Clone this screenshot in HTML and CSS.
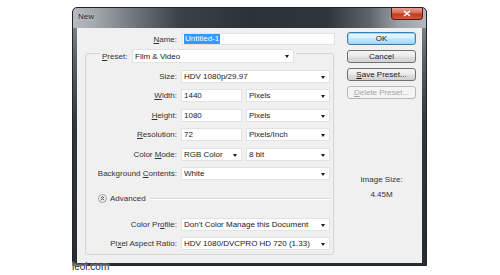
FILE: index.html
```html
<!DOCTYPE html>
<html>
<head>
<meta charset="utf-8">
<link rel="stylesheet" href="styles.css">
</head>
<body>
<div class="window">
  <div class="titlebar">
    <span class="title">New</span>
    <span class="close"><svg width="8" height="7" viewBox="0 0 8 7"><path d="M1 1 L7 6 M7 1 L1 6" stroke="#fff" stroke-width="1.6"/></svg></span>
  </div>
  <div class="client">
    <div class="main">
      <div class="name-row">
        <span class="nlabel"><u>N</u>ame:</span>
        <span class="field name-field"><span class="sel">Untitled-1</span></span>
      </div>
      <div class="group">
        <div class="legend">
          <span class="plabel"><u>P</u>reset:</span>
          <span class="field dd preset">Film &amp; Video<i class="arr"></i></span>
        </div>
        <div class="row r-first"><span class="lab">Size:</span><span class="field dd w-full">HDV 1080p/29.97<i class="arr"></i></span></div>
        <div class="row"><span class="lab"><u>W</u>idth:</span><span class="field w-num">1440</span><span class="field dd w-unit">Pixels<i class="arr"></i></span></div>
        <div class="row"><span class="lab"><u>H</u>eight:</span><span class="field w-num">1080</span><span class="field dd w-unit">Pixels<i class="arr"></i></span></div>
        <div class="row"><span class="lab"><u>R</u>esolution:</span><span class="field w-num">72</span><span class="field dd w-unit">Pixels/Inch<i class="arr"></i></span></div>
        <div class="row"><span class="lab">Color <u>M</u>ode:</span><span class="field dd w-num">RGB Color<i class="arr"></i></span><span class="field dd w-unit">8 bit<i class="arr"></i></span></div>
        <div class="row"><span class="lab">Background <u>C</u>ontents:</span><span class="field dd w-full">White<i class="arr"></i></span></div>
        <div class="adv">
          <svg class="advicon" width="9" height="9" viewBox="0 0 9 9"><circle cx="4.5" cy="4.5" r="4" fill="#f4f4f4" stroke="#8c8c8c" stroke-width="0.8"/><path d="M2.8 4.2 L4.5 2.6 L6.2 4.2 M2.8 6.3 L4.5 4.7 L6.2 6.3" fill="none" stroke="#333" stroke-width="0.9"/></svg>
          <span class="advtext">Advanced</span>
          <span class="advline"></span>
        </div>
        <div class="row r-prof"><span class="lab">Color Pr<u>o</u>file:</span><span class="field dd w-full">Don't Color Manage this Document<i class="arr"></i></span></div>
        <div class="row"><span class="lab">Pi<u>x</u>el Aspect Ratio:</span><span class="field dd w-full">HDV 1080/DVCPRO HD 720 (1.33)<i class="arr"></i></span></div>
      </div>
    </div>
    <div class="side">
      <span class="btn ok">OK</span>
      <span class="btn">Cancel</span>
      <span class="btn"><u>S</u>ave Preset...</span>
      <span class="btn disabled"><u>D</u>elete Preset...</span>
      <div class="isize">Image Size:</div>
      <div class="ival">4.45M</div>
    </div>
  </div>
</div>
<div class="watermark">leoi.com</div>
</body>
</html>
```

FILE: styles.css
```css
html, body {
  margin: 0;
  padding: 0;
}
body {
  width: 500px;
  height: 275px;
  background: #ffffff;
  font-family: "Liberation Sans", Arial, sans-serif;
  font-size: 8px;
  color: #222;
  position: relative;
  overflow: hidden;
}
u { text-decoration: underline; text-underline-offset: 1px; }

.window {
  margin: 7px 0 0 72px;
  width: 355px;
  height: 259px;
  box-sizing: border-box;
  border: 1px solid #1e252b;
  border-radius: 5px 5px 0 0;
  display: flex;
  flex-direction: column;
  background:
    linear-gradient(to right, #b7bbbf 0%, #a4a9ad 6%, #6c737a 18%, #3a4148 30%, #2b3239 50%, #2e353c 72%, #5d646b 84%, #9aa0a5 92%, #b3b7bb 100%) top left / 100% 20px no-repeat,
    linear-gradient(to bottom, #8d9398 0%, #5a6167 20%, #30373d 45%, #262c32 100%);
}
.titlebar {
  height: 20px;
  display: flex;
  align-items: flex-start;
  justify-content: space-between;
}
.title {
  margin: 4px 0 0 5px;
  font-size: 8px;
  color: #1f1f1f;
  text-shadow: 0 0 3px rgba(255,255,255,0.6);
}
.close {
  width: 30px;
  height: 11px;
  margin-right: 3px;
  margin-top: 0;
  border: 1px solid #5a1a12;
  border-top: none;
  border-radius: 0 0 4px 4px;
  background: linear-gradient(to bottom, #e8a293 0%, #d46a55 45%, #c2391f 55%, #cf5a3d 100%);
  display: flex;
  align-items: center;
  justify-content: center;
}
.close svg { display: block; }

.client {
  flex: 1;
  margin: 0 4px 2px 4px;
  background: #f0f0f0;
  display: flex;
}
.main {
  width: 259px;
  display: flex;
  flex-direction: column;
}
.name-row {
  margin-top: 5px;
  height: 12px;
  display: flex;
  align-items: center;
}
.nlabel {
  width: 100px;
  text-align: right;
  color: #333;
}
.field {
  box-sizing: border-box;
  height: 13px;
  background: #fff;
  border: 1px solid #e2e2e2;
  display: flex;
  align-items: center;
  padding-left: 2px;
  color: #1a1a1a;
  white-space: nowrap;
  position: relative;
}
.name-field {
  margin-left: 5px;
  width: 153px;
  height: 12px;
  padding-left: 1px;
}
.sel {
  background: #3399ff;
  color: #fff;
  padding: 0 1px;
  line-height: 10px;
}
.dd { padding-right: 10px; }
.arr {
  position: absolute;
  right: 4px;
  top: 5px;
  width: 0;
  height: 0;
  border-left: 2.5px solid transparent;
  border-right: 2.5px solid transparent;
  border-top: 3px solid #1a1a1a;
}

.group {
  margin: 8px 0 0 8px;
  width: 249px;
  height: 202px;
  box-sizing: border-box;
  border: 1px solid #d3d6d9;
  border-radius: 3px;
  display: flex;
  flex-direction: column;
}
.legend {
  margin: -5px 0 0 14px;
  height: 14px;
  display: flex;
  align-items: center;
  align-self: flex-start;
  background: #f0f0f0;
  padding: 0 2px 0 2px;
}
.plabel { color: #333; width: 30px; }
.preset {
  width: 162px;
  height: 14px;
}
.row {
  height: 13px;
  display: flex;
  align-items: center;
  margin-top: 6.4px;
  gap: 4px;
}
.r-first { margin-top: 7px; }
.r-prof { margin-top: 13px; }
.lab {
  width: 91px;
  text-align: right;
  color: #333;
  white-space: nowrap;
}
.w-full { width: 149px; }
.w-num { width: 61px; }
.w-unit { width: 84px; }

.adv {
  margin-top: 13px;
  height: 12px;
  display: flex;
  align-items: center;
  padding-left: 12px;
}
.advicon { display: block; }
.advtext { margin-left: 3px; color: #333; }
.advline {
  margin-left: 4px;
  width: 180px;
  height: 0;
  border-top: 1px solid #d3d6d9;
  border-bottom: 1px solid #ffffff;
}

.side {
  flex: 1;
  display: flex;
  flex-direction: column;
  align-items: flex-start;
  padding-left: 11px;
}
.btn {
  box-sizing: border-box;
  width: 69px;
  height: 13px;
  margin-top: 5px;
  border: 1px solid #707070;
  border-radius: 3px;
  background: linear-gradient(to bottom, #f4f4f4 0%, #ececec 48%, #dedede 52%, #d2d2d2 100%);
  display: flex;
  align-items: center;
  justify-content: center;
  color: #1a1a1a;
  white-space: nowrap;
}
.btn.ok {
  margin-top: 4px;
  border-color: #3c7fb1;
  background: linear-gradient(to bottom, #eaf6fd 0%, #d9f0fc 48%, #bee6fd 52%, #a7d9f5 100%);
  box-shadow: inset 0 0 0 1px #9fd6f4;
}
.btn.disabled {
  border-color: #b5b8ba;
  background: #f4f4f4;
  color: #a6a6a6;
}
.isize {
  margin-top: 76px;
  width: 69px;
  text-align: center;
  color: #333;
}
.ival {
  margin-top: 6px;
  width: 69px;
  text-align: center;
  color: #333;
}
.watermark {
  position: absolute;
  left: 72px;
  top: 261px;
  font-size: 10px;
  color: #2a2f34;
  text-shadow: 0 0 1px #fff, 0 0 2px #fff;
  letter-spacing: 0;
}
```
